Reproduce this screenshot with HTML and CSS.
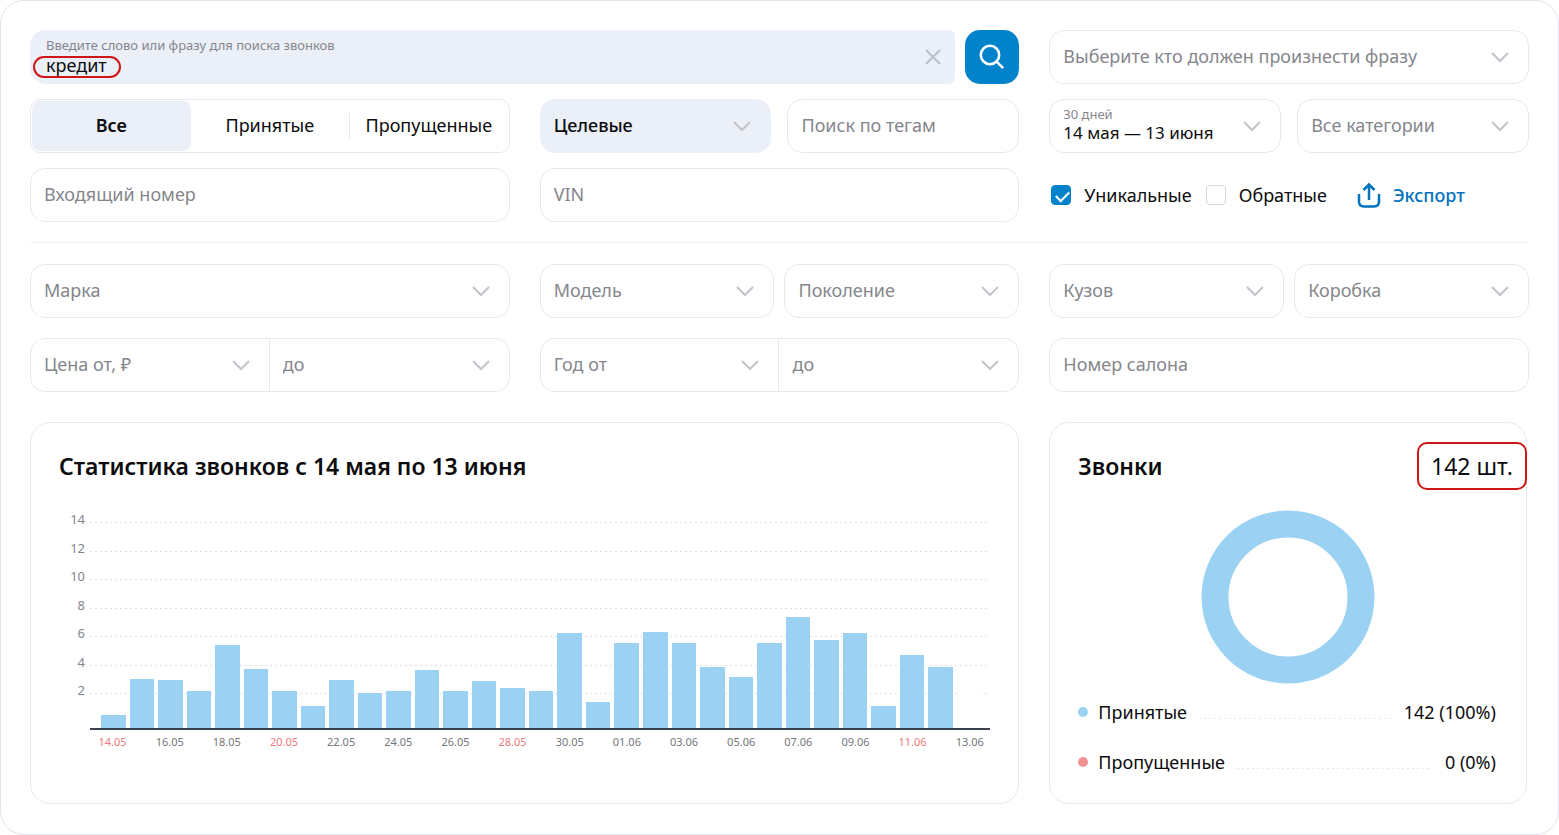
FILE: index.html
```html
<!DOCTYPE html>
<html lang="ru">
<head>
<meta charset="utf-8">
<meta name="viewport" content="width=device-width, initial-scale=1">
<title>Статистика звонков</title>
<link rel="stylesheet" href="styles.css">
</head>
<body>
<svg class="sprite" aria-hidden="true">
  <symbol id="chevron" viewBox="0 0 20 12"><path d="M2 2l8 8 8-8"/></symbol>
</svg>
<main class="frame">
  <form class="filters">
    <div class="search">
      <div class="search-box">
        <div class="search-text">
          <label class="caption" for="phrase">Введите слово или фразу для поиска звонков</label>
          <input class="search-input" id="phrase" type="text" value="кредит">
          <span class="mark"></span>
        </div>
        <button class="clear" type="button" aria-label="Очистить">
          <svg viewBox="0 0 18 18" width="18" height="18"><path d="M2 2l14 14M16 2L2 16"/></svg>
        </button>
      </div>
      <button class="submit" type="submit" aria-label="Найти">
        <svg viewBox="0 0 26 26" width="26" height="26"><circle cx="11" cy="11" r="9.2"/><path d="M17.6 17.6l6.6 6.6"/></svg>
      </button>
    </div>
    <div class="field">
      <select class="control" aria-label="Кто произнёс фразу"><option>Выберите кто должен произнести фразу</option></select>
      <svg class="chevron"><use href="#chevron"/></svg>
    </div>

    <div class="tabs">
      <button class="tab tab-active" type="button">Все</button>
      <button class="tab" type="button">Принятые</button>
      <button class="tab tab-divided" type="button">Пропущенные</button>
    </div>
    <div class="pair pair-wide">
      <div class="field field-filled">
        <select class="control" aria-label="Тип звонков"><option>Целевые</option></select>
        <svg class="chevron"><use href="#chevron"/></svg>
      </div>
      <div class="field"><input class="control" type="text" aria-label="Поиск по тегам" placeholder="Поиск по тегам"></div>
    </div>
    <div class="pair pair-wide">
      <div class="field">
        <button class="control period" type="button"><span class="caption">30 дней</span><span class="period-value">14 мая — 13 июня</span></button>
        <svg class="chevron"><use href="#chevron"/></svg>
      </div>
      <div class="field">
        <select class="control" aria-label="Категория"><option>Все категории</option></select>
        <svg class="chevron"><use href="#chevron"/></svg>
      </div>
    </div>

    <div class="field"><input class="control" type="text" aria-label="Входящий номер" placeholder="Входящий номер"></div>
    <div class="field"><input class="control" type="text" aria-label="VIN" placeholder="VIN"></div>
    <div class="options">
      <label class="option"><input class="check" type="checkbox" checked>Уникальные</label>
      <label class="option"><input class="check" type="checkbox">Обратные</label>
      <a class="export" href="#export">
        <svg viewBox="0 0 24 26" width="24" height="26"><path d="M2 12v7.500q0 5 5 5h10q5 0 5-5V12M12 18V2.500M6.500 8L12 2.500 17.500 8"/></svg>
        Экспорт
      </a>
    </div>
  </form>

  <form class="filters car">
    <div class="field">
      <select class="control" aria-label="Марка"><option>Марка</option></select>
      <svg class="chevron"><use href="#chevron"/></svg>
    </div>
    <div class="pair">
      <div class="field">
        <select class="control" aria-label="Модель"><option>Модель</option></select>
        <svg class="chevron"><use href="#chevron"/></svg>
      </div>
      <div class="field">
        <select class="control" aria-label="Поколение"><option>Поколение</option></select>
        <svg class="chevron"><use href="#chevron"/></svg>
      </div>
    </div>
    <div class="pair">
      <div class="field">
        <select class="control" aria-label="Кузов"><option>Кузов</option></select>
        <svg class="chevron"><use href="#chevron"/></svg>
      </div>
      <div class="field">
        <select class="control" aria-label="Коробка"><option>Коробка</option></select>
        <svg class="chevron"><use href="#chevron"/></svg>
      </div>
    </div>
    <div class="pair pair-joined">
      <div class="field">
        <select class="control" aria-label="Цена от"><option>Цена от, ₽</option></select>
        <svg class="chevron"><use href="#chevron"/></svg>
      </div>
      <div class="field">
        <select class="control" aria-label="Цена до"><option>до</option></select>
        <svg class="chevron"><use href="#chevron"/></svg>
      </div>
    </div>
    <div class="pair pair-joined">
      <div class="field">
        <select class="control" aria-label="Год от"><option>Год от</option></select>
        <svg class="chevron"><use href="#chevron"/></svg>
      </div>
      <div class="field">
        <select class="control" aria-label="Год до"><option>до</option></select>
        <svg class="chevron"><use href="#chevron"/></svg>
      </div>
    </div>
    <div class="field"><input class="control" type="text" aria-label="Номер салона" placeholder="Номер салона"></div>
  </form>

  <div class="cards">
    <section class="card card-chart">
      <h2 class="title">Статистика звонков с 14 мая по 13 июня</h2>
      <div class="chart">
        <div class="scale ticks">
          <span>14</span><span>12</span><span>10</span><span>8</span><span>6</span><span>4</span><span>2</span>
        </div>
        <div class="plot">
          <div class="scale lines"><i></i><i></i><i></i><i></i><i></i><i></i><i></i></div>
          <div class="bars">
            <div class="bar" style="height:6.3%"></div>
            <div class="bar" style="height:23.8%"></div>
            <div class="bar" style="height:23.3%"></div>
            <div class="bar" style="height:18%"></div>
            <div class="bar" style="height:40.3%"></div>
            <div class="bar" style="height:28.6%"></div>
            <div class="bar" style="height:18%"></div>
            <div class="bar" style="height:10.7%"></div>
            <div class="bar" style="height:23.3%"></div>
            <div class="bar" style="height:17%"></div>
            <div class="bar" style="height:18%"></div>
            <div class="bar" style="height:28.2%"></div>
            <div class="bar" style="height:18%"></div>
            <div class="bar" style="height:22.8%"></div>
            <div class="bar" style="height:19.4%"></div>
            <div class="bar" style="height:18%"></div>
            <div class="bar" style="height:46.1%"></div>
            <div class="bar" style="height:12.6%"></div>
            <div class="bar" style="height:41.3%"></div>
            <div class="bar" style="height:46.6%"></div>
            <div class="bar" style="height:41.3%"></div>
            <div class="bar" style="height:29.6%"></div>
            <div class="bar" style="height:24.8%"></div>
            <div class="bar" style="height:41.3%"></div>
            <div class="bar" style="height:53.9%"></div>
            <div class="bar" style="height:42.7%"></div>
            <div class="bar" style="height:46.1%"></div>
            <div class="bar" style="height:10.7%"></div>
            <div class="bar" style="height:35.4%"></div>
            <div class="bar" style="height:29.6%"></div>
            <div class="bar bar-empty" style="height:18%"></div>
          </div>
        </div>
        <div class="dates">
          <span class="holiday">14.05</span><span>16.05</span><span>18.05</span><span class="holiday">20.05</span><span>22.05</span><span>24.05</span><span>26.05</span><span class="holiday">28.05</span><span>30.05</span><span>01.06</span><span>03.06</span><span>05.06</span><span>07.06</span><span>09.06</span><span class="holiday">11.06</span><span>13.06</span>
        </div>
      </div>
    </section>
    <section class="card card-total">
      <header class="total-head">
        <h2 class="title">Звонки</h2>
        <span class="total">142 шт.</span>
      </header>
      <svg class="donut" viewBox="0 0 174 174" width="174" height="174"><circle cx="87" cy="87" r="73"/></svg>
      <ul class="legend">
        <li class="legend-row"><span class="dot"></span>Принятые<span class="leader"></span>142 (100%)</li>
        <li class="legend-row"><span class="dot dot-missed"></span>Пропущенные<span class="leader"></span>0 (0%)</li>
      </ul>
    </section>
  </div>
</main>
</body>
</html>
```
FILE: styles.css
```css
:root {
  --text: #0c0c0e;
  --muted: #85868c;
  --line: #e9e9ed;
  --fill: #eaeff8;
  --blue: #0083cb;
  --sky: #9bd1f3;
  --rose: #f09294;
  --red: #cf1616;
  --dots: repeating-linear-gradient(90deg, #dfdfe3 0 2px, transparent 2px 5px);
}

* {
  box-sizing: border-box;
}

body {
  margin: 0;
  background: #fff;
  color: var(--text);
  font: 18px/24px "Noto Sans", "Open Sans", sans-serif;
}

input,
select,
button {
  margin: 0;
  padding: 0;
  border: 0;
  background: none;
  color: inherit;
  font: inherit;
  appearance: none;
}

.sprite {
  display: none;
}

.frame {
  min-height: 100vh;
  padding: 29px;
  border: 1px solid #e1e3ee;
  border-radius: 24px;
}

.filters {
  display: grid;
  grid-template-columns: repeat(3, minmax(0, 1fr));
  gap: 15px 30px;
}

.car {
  row-gap: 20px;
  margin-top: 20px;
  padding-top: 21px;
  border-top: 1px solid #f0f0f3;
}

/* Search */

.search {
  display: flex;
  grid-column: span 2;
  gap: 10px;
}

.search-box {
  display: flex;
  flex: 1;
  align-items: center;
  justify-content: space-between;
  padding: 0 13px 0 16px;
  border-radius: 16px 6px 6px 16px;
  background: var(--fill);
}

.search-text {
  position: relative;
  display: flex;
  flex: 1;
  flex-direction: column;
}

.caption {
  color: var(--muted);
  font-size: 13px;
  line-height: 16px;
}

.search-input {
  height: 24px;
  outline: 0;
}

.mark {
  position: absolute;
  bottom: -1px;
  left: -13px;
  width: 88px;
  height: 22px;
  border: 2px solid var(--red);
  border-radius: 11px;
  pointer-events: none;
}

.clear {
  display: flex;
  stroke: #b9bfcc;
  stroke-width: 2;
}

.submit {
  display: grid;
  place-items: center;
  width: 54px;
  height: 54px;
  border-radius: 15px;
  background: var(--blue);
  fill: none;
  stroke: #fff;
  stroke-width: 2.5;
}

/* Fields */

.field {
  display: grid;
  height: 54px;
  border: 1px solid var(--line);
  border-radius: 15px;
}

.field-filled {
  border-color: var(--fill);
  background: var(--fill);
  font-weight: 500;
}

.control {
  grid-area: 1 / 1;
  width: 100%;
  min-width: 0;
  padding: 0 13px 2px;
  color: var(--muted);
  text-align: left;
}

.control::placeholder {
  color: var(--muted);
  opacity: 1;
}

.field-filled .control {
  color: var(--text);
}

.chevron {
  grid-area: 1 / 1;
  place-self: center end;
  width: 20px;
  height: 12px;
  margin-right: 18px;
  fill: none;
  stroke: #c3c4cb;
  stroke-width: 2;
  pointer-events: none;
}

.period {
  display: flex;
  flex-direction: column;
  justify-content: center;
}

.period-value {
  color: var(--text);
  font-size: 17px;
  line-height: 22px;
}

.pair {
  display: grid;
  grid-template-columns: repeat(2, minmax(0, 1fr));
  gap: 10px;
}

.pair-wide {
  gap: 16px;
}

.pair-joined {
  gap: 0;
}

.pair-joined .field:first-child {
  border-radius: 15px 0 0 15px;
}

.pair-joined .field:last-child {
  border-left: 0;
  border-radius: 0 15px 15px 0;
}

/* Tabs */

.tabs {
  display: grid;
  grid-template-columns: repeat(3, 1fr);
  align-items: center;
  height: 54px;
  padding: 1px;
  border: 1px solid var(--line);
  border-radius: 10px;
}

.tab {
  padding-bottom: 2px;
}

.tab-active {
  height: 50px;
  border-radius: 8px;
  background: var(--fill);
  font-weight: 600;
}

.tab-divided {
  border-left: 1px solid var(--line);
}

/* Options */

.options {
  display: flex;
  align-items: center;
}

.option {
  display: flex;
  align-items: center;
  gap: 13px;
  margin: 0 12px 0 2px;
}

.check {
  width: 20px;
  height: 20px;
  border: 1px solid #d5d6dc;
  border-radius: 4px;
}

.check:checked {
  border-color: var(--blue);
  background: var(--blue);
}

.check:checked::before {
  display: block;
  width: 11px;
  height: 6px;
  margin: 5px 0 0 4px;
  border: solid #fff;
  border-width: 0 0 2px 2px;
  content: "";
  transform: rotate(-45deg);
}

.export {
  display: flex;
  align-items: center;
  gap: 12px;
  margin-left: 18px;
  color: #0071bd;
  font-weight: 500;
  text-decoration: none;
}

.export svg {
  fill: none;
  stroke: #0071bd;
  stroke-width: 2.5;
}

/* Cards */

.cards {
  display: grid;
  grid-template-columns: repeat(3, minmax(0, 1fr));
  gap: 30px;
  margin-top: 30px;
}

.card {
  border: 1px solid var(--line);
  border-radius: 20px;
}

.card-chart {
  grid-column: span 2;
  padding: 27px 28px;
}

.card-total {
  display: flex;
  flex-direction: column;
  margin-right: 2px;
  padding: 19px 28px 28px;
}

.title {
  margin: 0;
  font-size: 23px;
  font-weight: 600;
  line-height: 32px;
}

/* Chart */

.chart {
  display: grid;
  grid-template-columns: 26px minmax(0, 1fr);
  column-gap: 5px;
  margin-top: 40px;
}

.scale {
  display: grid;
  grid-template-rows: repeat(6, 1fr) 35px;
}

.ticks {
  height: 206px;
  color: #85868c;
  font-size: 13px;
  line-height: 20px;
  text-align: right;
}

.ticks span {
  margin-top: -13px;
}

.plot {
  display: grid;
  grid-template-rows: 206px;
  border-bottom: 2px solid #3b424d;
}

.lines,
.bars {
  grid-area: 1 / 1;
}

.lines i {
  height: 1px;
  background: var(--dots);
}

.bars {
  display: grid;
  grid-template-columns: repeat(31, minmax(0, 1fr));
  align-items: end;
  padding: 0 7px 0 9px;
}

.bar {
  margin: 0 2px;
  background: var(--sky);
}

.bar-empty {
  background: #fff;
}

.dates {
  display: grid;
  grid-column: 2;
  grid-template-columns: repeat(16, 1fr);
  margin: 4px -8px 0 -6px;
  color: #74757b;
  font-size: 11px;
  line-height: 16px;
  text-align: center;
}

.holiday {
  color: #f0797c;
}

/* Totals */

.total-head {
  display: flex;
  align-items: center;
  justify-content: space-between;
  margin-right: -29px;
}

.total {
  padding: 6px 12px;
  border: 2px solid var(--red);
  border-radius: 10px;
  font-size: 23px;
  line-height: 32px;
}

.donut {
  align-self: center;
  margin-top: 20px;
  fill: none;
  stroke: var(--sky);
  stroke-width: 27;
}

.legend {
  display: grid;
  gap: 24px;
  margin: 15px 2px 0 0;
  padding: 0;
  line-height: 26px;
  list-style: none;
}

.legend-row {
  display: flex;
  align-items: center;
}

.dot {
  width: 10px;
  height: 10px;
  margin-right: 10px;
  border-radius: 50%;
  background: var(--sky);
}

.dot-missed {
  background: var(--rose);
}

.leader {
  flex: 1;
  height: 1px;
  margin: 12px 12px 0;
  background: var(--dots);
  opacity: 0.7;
}
```
